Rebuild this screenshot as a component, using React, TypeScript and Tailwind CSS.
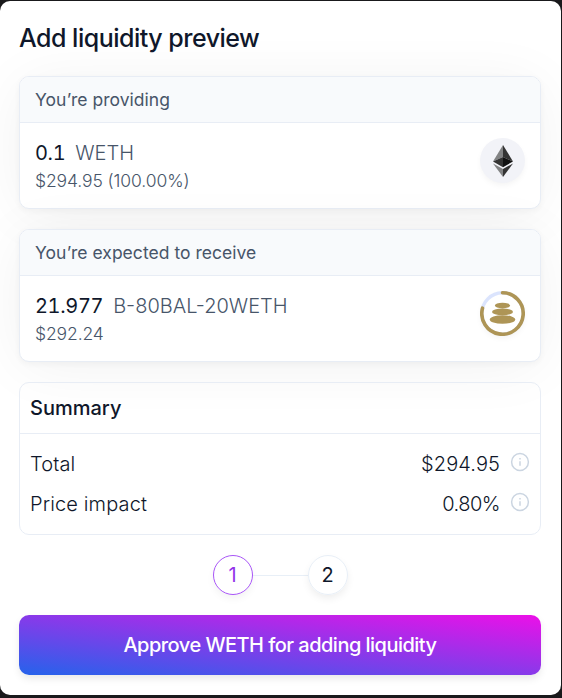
import React from 'react';

function EthIcon() {
  return (
    <div className="flex size-[45px] items-center justify-center rounded-full bg-[#f2f3f8] shadow-[0_3px_6px_-1px_rgba(0,0,0,0.05)]">
      <svg width="20" height="32" viewBox="0 0 20 32" className="block">
        <path d="M10 0 0 16.5 10 12z" fill="#828384" />
        <path d="M10 0 20 16.5 10 12z" fill="#343434" />
        <path d="M0 16.5 10 12V22.2z" fill="#343434" />
        <path d="M20 16.5 10 12V22.2z" fill="#121212" />
        <path d="M0 18.4 10 24.1V32z" fill="#828384" />
        <path d="M20 18.4 10 24.1V32z" fill="#343434" />
      </svg>
    </div>
  );
}

function PoolIcon() {
  return (
    <div className="size-[45px] rounded-full bg-white shadow-[0_3px_6px_-1px_rgba(0,0,0,0.05)]">
      <svg width="45" height="45" viewBox="0 0 45 45" className="block">
        <circle cx="22.5" cy="22.5" r="20.7" fill="none" stroke="#dbe4fd" strokeWidth="3.4" />
        <path d="M22.5 1.8A20.7 20.7 0 1 1 2.5 17.2" fill="none" stroke="#ae9556" strokeWidth="3.6" strokeLinecap="round" />
        <ellipse cx="22.5" cy="14.6" rx="7.7" ry="2.8" fill="#ae9556" />
        <ellipse cx="22.5" cy="20.9" rx="10.5" ry="3.3" fill="#ae9556" />
        <ellipse cx="22.5" cy="28.5" rx="12.8" ry="4.3" fill="#ae9556" />
      </svg>
    </div>
  );
}

function InfoIcon() {
  return (
    <svg width="20" height="20" viewBox="0 0 20 20" fill="none" stroke="#cbd5e1" strokeWidth="1.5" className="mb-1 ml-2.5 block">
      <circle cx="10" cy="10" r="8.4" />
      <path d="M10 9.2v4.6M10 6v1.6" />
    </svg>
  );
}

interface TokenCardProps {
  title: string;
  amount: string;
  symbol: string;
  value: string;
  children: React.ReactNode;
}

function TokenCard({ title, amount, symbol, value, children }: TokenCardProps) {
  return (
    <section className="mb-5 h-[133px] overflow-hidden rounded-[10px] border border-[#e8edf5] bg-white shadow-[0_6px_60px_-2px_rgba(0,0,0,0.06),0_2px_6px_rgba(0,0,0,0.04)]">
      <h2 className="flex h-[46px] items-center border-b border-[#e8edf5] bg-[#f8fafc] px-[15px] pt-px text-[17.5px] font-normal tracking-[0.03px] text-[#475569]">
        {title}
      </h2>
      <div className="flex items-start justify-between px-[15px] pt-[15px]">
        <div>
          <div className="flex h-[30px] items-center text-[20px] leading-[30px]">
            <span className="mr-2.5 tracking-[-0.35px] text-[#0f172a] tabular-nums">{amount}</span>
            <span className="font-light text-[#475569]">{symbol}</span>
          </div>
          <div className="text-[17.5px] leading-[25px] font-[340] tracking-[-0.1px] text-[#475569]">{value}</div>
        </div>
        {children}
      </div>
    </section>
  );
}

function SummaryRow({ label, value, valueClass }: { label: string; value: string; valueClass: string }) {
  return (
    <div className="flex h-10 items-center justify-between text-[20px] font-light text-[#0f172a]">
      <span className="tracking-[0.13px]">{label}</span>
      <div className="flex items-center">
        <span className={valueClass}>{value}</span>
        <InfoIcon />
      </div>
    </div>
  );
}

export default function App() {
  return (
    <div className="h-[698px] w-[562px] overflow-hidden bg-[#19191b] pt-px font-['Inter','Liberation_Sans',sans-serif]">
      <main className="h-[694px] w-[561px] overflow-hidden rounded-[10px] bg-white px-[19px] pr-5">
        <h1 className="flex h-[75px] items-center text-[25px] font-[550] tracking-[-0.5px] text-[#0f172a]">
          Add liquidity preview
        </h1>
        <TokenCard title="You’re providing" amount="0.1" symbol="WETH" value="$294.95 (100.00%)">
          <EthIcon />
        </TokenCard>
        <TokenCard title="You’re expected to receive" amount="21.977" symbol="B-80BAL-20WETH" value="$292.24">
          <PoolIcon />
        </TokenCard>
        <section className="h-[153px] rounded-[10px] border border-[#e8edf5]">
          <h2 className="flex h-[51px] items-center border-b border-[#e8edf5] px-2.5 text-[20px] font-[550] text-[#0f172a]">
            Summary
          </h2>
          <div className="px-2.5 pt-2.5">
            <SummaryRow label="Total" value="$294.95" valueClass="tracking-[0.1px]" />
            <SummaryRow label="Price impact" value="0.80%" valueClass="tracking-[-0.5px]" />
          </div>
        </section>
        <div className="mt-5 flex items-center justify-center text-[20px]">
          <div className="flex size-10 items-center justify-center rounded-full border border-[#a855f7] text-[#9333ea] shadow-[0_4px_8px_-1px_rgba(0,0,0,0.06)]">
            1
          </div>
          <div className="h-px w-[55px] bg-[#e8eff7]" />
          <div className="flex size-10 items-center justify-center rounded-full border border-[#e8eff7] text-[#0f172a] shadow-[0_4px_8px_-1px_rgba(0,0,0,0.08)]">
            2
          </div>
        </div>
        <button className="mt-5 flex h-[60px] w-full items-center justify-center rounded-[10px] bg-[linear-gradient(to_top_right,#2563eb,#ec10e8)] text-[20px] font-medium tracking-[-0.52px] text-white shadow-[0_4px_8px_-1px_rgba(0,0,0,0.1)]">
          Approve WETH for adding liquidity
        </button>
      </main>
    </div>
  );
}
